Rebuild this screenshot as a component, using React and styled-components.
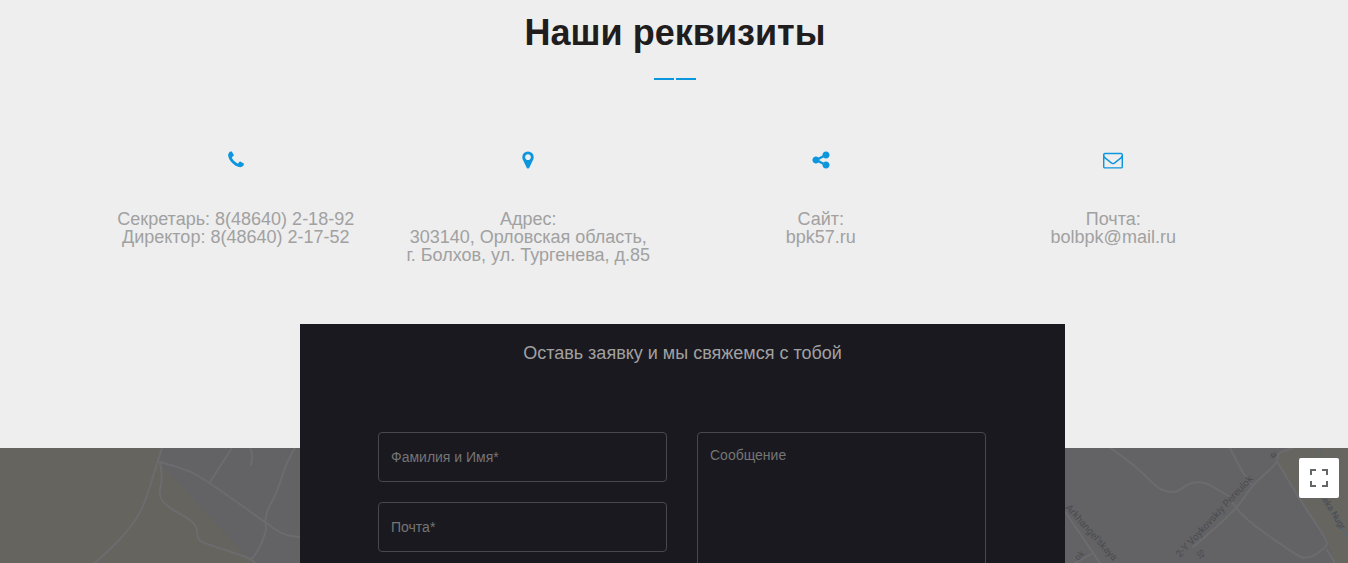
import React from 'react';
import styled, { createGlobalStyle } from 'styled-components';

const GlobalStyle = createGlobalStyle`
  html, body {
    margin: 0;
    padding: 0;
    height: 563px;
    overflow: hidden;
    background: #eeeeee;
    font-family: "Liberation Sans", Arial, sans-serif;
  }
  * {
    box-sizing: border-box;
  }
`;

const Page = styled.div`
  position: relative;
  width: 1348px;
  height: 563px;
  overflow: hidden;
`;

const Details = styled.section`
  height: 448px;
  padding: 12px 0 0 1px;
  background: #eeeeee;
`;

const Title = styled.h2`
  margin: 0;
  padding-left: 1px;
  font-size: 36px;
  line-height: 41px;
  font-weight: 700;
  text-align: center;
  color: #1f1d1d;
`;

const Dashes = styled.div`
  display: flex;
  justify-content: center;
  gap: 2px;
  margin-top: 25px;
  padding-left: 1px;
`;

const Dash = styled.span`
  width: 20px;
  height: 2px;
  background: #0c96de;
`;

const Columns = styled.div`
  display: grid;
  grid-template-columns: repeat(4, 1fr);
  width: 1170px;
  margin: 70px auto 0;
`;

const Column = styled.div`
  display: flex;
  flex-direction: column;
  align-items: center;
  text-align: center;
`;

const Icon = styled.svg`
  display: block;
  width: 20px;
  height: 20px;
  fill: #0c96de;
`;

const Info = styled.p`
  margin: 40px 0 0;
  font-size: 18px;
  line-height: 18px;
  color: #a1a1a1;
`;

const MapArea = styled.div`
  position: relative;
  height: 115px;
  background: #636366;
`;

const MapDrawing = styled.svg`
  display: block;
  width: 100%;
  height: 100%;
`;

const FullscreenButton = styled.button`
  position: absolute;
  top: 10px;
  right: 9px;
  display: flex;
  align-items: center;
  justify-content: center;
  width: 40px;
  height: 40px;
  padding: 0;
  border: 0;
  border-radius: 2px;
  background: #ffffff;
`;

const Panel = styled.div`
  position: absolute;
  top: 324px;
  left: 300px;
  width: 765px;
  height: 320px;
  background: #1a1920;
`;

const PanelTitle = styled.h3`
  margin: 0;
  padding-top: 19px;
  font-size: 18px;
  line-height: 20px;
  font-weight: 400;
  text-align: center;
  color: #a1a1a1;
`;

const Form = styled.form`
  display: grid;
  grid-template-columns: 289px 289px;
  column-gap: 30px;
  padding: 69px 0 0 78px;
`;

const LeftFields = styled.div`
  display: flex;
  flex-direction: column;
  gap: 20px;
`;

const fieldStyles = `
  display: block;
  width: 100%;
  border: 1px solid #47474d;
  border-radius: 4px;
  background: transparent;
  padding: 0 12px;
  font-family: "Liberation Sans", Arial, sans-serif;
  font-size: 14px;
  color: #ccc;
  outline: none;
  &::placeholder {
    color: #757575;
    opacity: 1;
  }
`;

const Field = styled.input`
  ${fieldStyles}
  height: 50px;
`;

const Message = styled.textarea`
  ${fieldStyles}
  height: 190px;
  padding-top: 14px;
  line-height: 16px;
  resize: none;
`;

const road = { fill: 'none', stroke: '#6c6c6f', strokeWidth: 2, strokeLinejoin: 'round', strokeLinecap: 'round' };
const label = { fill: '#4b4b4e', fontSize: 10, fontFamily: '"Roboto", sans-serif' };

const roads = [
  [[162, 0], [157, 15], [147, 49], [138, 69], [120, 92], [95, 115]],
  [[159, 14], [185, 20], [210, 35], [265, 74], [283, 87], [300, 89]],
  [[210, 34], [232, 0]],
  [[250, 0], [253, 5], [251, 17]],
  [[295, 0], [287, 12], [277, 45], [267, 62], [265, 74], [267, 82], [257, 105], [250, 112]],
  [[160, 14], [163, 32], [158, 47], [167, 59], [197, 75], [197, 90], [203, 95], [250, 110], [255, 115]],
  [[1110, 0], [1132, 14], [1168, 51], [1197, 29], [1230, 49]],
  [[1230, 0], [1242, 24], [1252, 37]],
  [[1193, 99], [1235, 64], [1252, 37], [1278, 15], [1277, 5], [1293, 0]],
  [[1230, 49], [1235, 64], [1293, 105], [1307, 112], [1327, 99], [1327, 92], [1300, 52], [1278, 15]],
  [[1327, 102], [1335, 115]],
  [[1064, 62], [1093, 105], [1100, 115]],
  [[1075, 115], [1093, 105]],
];

// rounds the corners of a road by bending through the midpoints
function smooth(points) {
  let d = `M${points[0][0]} ${points[0][1]}`;
  for (let i = 1; i < points.length - 1; i++) {
    const midX = (points[i][0] + points[i + 1][0]) / 2;
    const midY = (points[i][1] + points[i + 1][1]) / 2;
    d += ` Q${points[i][0]} ${points[i][1]} ${midX} ${midY}`;
  }
  const last = points[points.length - 1];
  return `${d} L${last[0]} ${last[1]}`;
}

function MapBackground() {
  return (
    <MapDrawing viewBox="0 0 1348 115" preserveAspectRatio="none">
      <polygon points="0,0 162,0 159,14 247,109 252,115 0,115" fill="#65645f" />
      <polygon points="1277,5 1293,0 1348,0 1348,115 1335,115 1327,92 1300,52 1278,15" fill="#666560" />
      {roads.map((points) => (
        <path key={points.join()} d={smooth(points)} {...road} />
      ))}
      <path d="M1321 0 L1322 11 M1322 49 L1337 72 L1348 90" fill="none" stroke="#4a6a86" strokeWidth="1" />
      <text x="1065" y="60" transform="rotate(48 1065 60)" {...label}>Arkhangel'skaya</text>
      <text x="1180" y="110" transform="rotate(-47 1180 110)" {...label}>2-Y Voykovskiy Pereulok</text>
      <text x="1078" y="113" transform="rotate(-45 1078 113)" {...label} fontSize="9">ok</text>
      <text x="1196" y="104" transform="rotate(60 1196 104)" {...label} fontSize="9">St</text>
      <text x="1270" y="6" transform="rotate(60 1270 6)" {...label}>a</text>
      <text x="1319" y="47" transform="rotate(58 1319 47)" {...label} fontSize="9">Reka Nugr</text>
    </MapDrawing>
  );
}

const glyphs = {
  phone:
    'M1600 1240q0 27-10 70.5t-21 68.5q-21 50-122 106-94 51-186 51-27 0-53-3.5t-57.5-12.5-47-14.5-55.5-20.5-49-18q-98-35-175-83-127-79-264-216t-216-264q-48-77-83-175-3-9-18-49t-20.5-55.5-14.5-47-12.5-57.5-3.5-53q0-92 51-186 56-101 106-122 25-11 68.5-21t70.5-10q14 0 21 3 18 6 53 76 11 19 30 54t35 63.5 31 53.5q3 4 17.5 25t21.5 35.5 7 28.5q0 20-28.5 50t-62 55-62 53-28.5 46q0 9 5 22.5t8.5 20.5 14 24 11.5 19q76 137 174 235t235 174q2 1 19 11.5t24 14 20.5 8.5 22.5 5q18 0 46-28.5t53-62 55-62 50-28.5q14 0 28.5 7t35.5 21.5 25 17.5q25 15 53.5 31t63.5 35 54 30q70 35 76 53 3 7 3 21z',
  marker:
    'M1152 640q0-106-75-181t-181-75-181 75-75 181 75 181 181 75 181-75 75-181zm256 0q0 109-33 179l-364 774q-16 33-47.5 52t-67.5 19-67.5-19-46.5-52l-365-774q-33-70-33-179 0-212 150-362t362-150 362 150 150 362z',
  share:
    'M1344 1024q133 0 226.5 93.5t93.5 226.5-93.5 226.5-226.5 93.5-226.5-93.5-93.5-226.5q0-12 2-34l-360-180q-92 86-218 86-133 0-226.5-93.5t-93.5-226.5 93.5-226.5 226.5-93.5q126 0 218 86l360-180q-2-22-2-34 0-133 93.5-226.5t226.5-93.5 226.5 93.5 93.5 226.5-93.5 226.5-226.5 93.5q-126 0-218-86l-360 180q2 22 2 34t-2 34l360 180q92-86 218-86z',
  envelope:
    'M1664 1504v-768q-32 36-69 66-268 206-426 338-51 43-83 67t-86.5 48.5-102.5 24.5h-2q-48 0-102.5-24.5t-86.5-48.5-83-67q-158-132-426-338-37-30-69-66v768q0 13 9.5 22.5t22.5 9.5h1472q13 0 22.5-9.5t9.5-22.5zm0-1051v-24.5l-.5-13-3-12.5-5.5-9-9-7.5-14-2.5h-1472q-13 0-22.5 9.5t-9.5 22.5q0 168 147 284 193 152 401 317 6 5 35 29.5t46 37.5 44.5 31.5 50.5 27.5 43 9h2q20 0 43-9t50.5-27.5 44.5-31.5 46-37.5 35-29.5q208-165 401-317 54-43 100.5-115.5t46.5-131.5zm128-37v1088q0 66-47 113t-113 47h-1472q-66 0-113-47t-47-113v-1088q0-66 47-113t113-47h1472q66 0 113 47t47 113z',
};

const contacts = [
  { icon: 'phone', lines: ['Секретарь: 8(48640) 2-18-92', 'Директор: 8(48640) 2-17-52'] },
  { icon: 'marker', lines: ['Адрес:', '303140, Орловская область,', 'г. Болхов, ул. Тургенева, д.85'] },
  { icon: 'share', lines: ['Сайт:', 'bpk57.ru'] },
  { icon: 'envelope', lines: ['Почта:', 'bolbpk@mail.ru'] },
];

export default function App() {
  return (
    <Page>
      <GlobalStyle />
      <Details>
        <Title>Наши реквизиты</Title>
        <Dashes>
          <Dash />
          <Dash />
        </Dashes>
        <Columns>
          {contacts.map((c) => (
            <Column key={c.icon}>
              <Icon viewBox="0 0 1792 1792">
                <path d={glyphs[c.icon]} />
              </Icon>
              <Info>
                {c.lines.map((line) => (
                  <React.Fragment key={line}>
                    {line}
                    <br />
                  </React.Fragment>
                ))}
              </Info>
            </Column>
          ))}
        </Columns>
      </Details>
      <MapArea>
        <MapBackground />
        <FullscreenButton type="button" aria-label="Во весь экран">
          <svg width="18" height="18" viewBox="0 0 18 18" fill="#666666">
            <path d="M0 0h6v2H2v4H0zM12 0h6v6h-2V2h-4zM0 12h2v4h4v2H0zM16 12h2v6h-6v-2h4z" />
          </svg>
        </FullscreenButton>
      </MapArea>
      <Panel>
        <PanelTitle>Оставь заявку и мы свяжемся с тобой</PanelTitle>
        <Form>
          <LeftFields>
            <Field placeholder="Фамилия и Имя*" />
            <Field placeholder="Почта*" />
          </LeftFields>
          <Message placeholder="Сообщение" />
        </Form>
      </Panel>
    </Page>
  );
}
